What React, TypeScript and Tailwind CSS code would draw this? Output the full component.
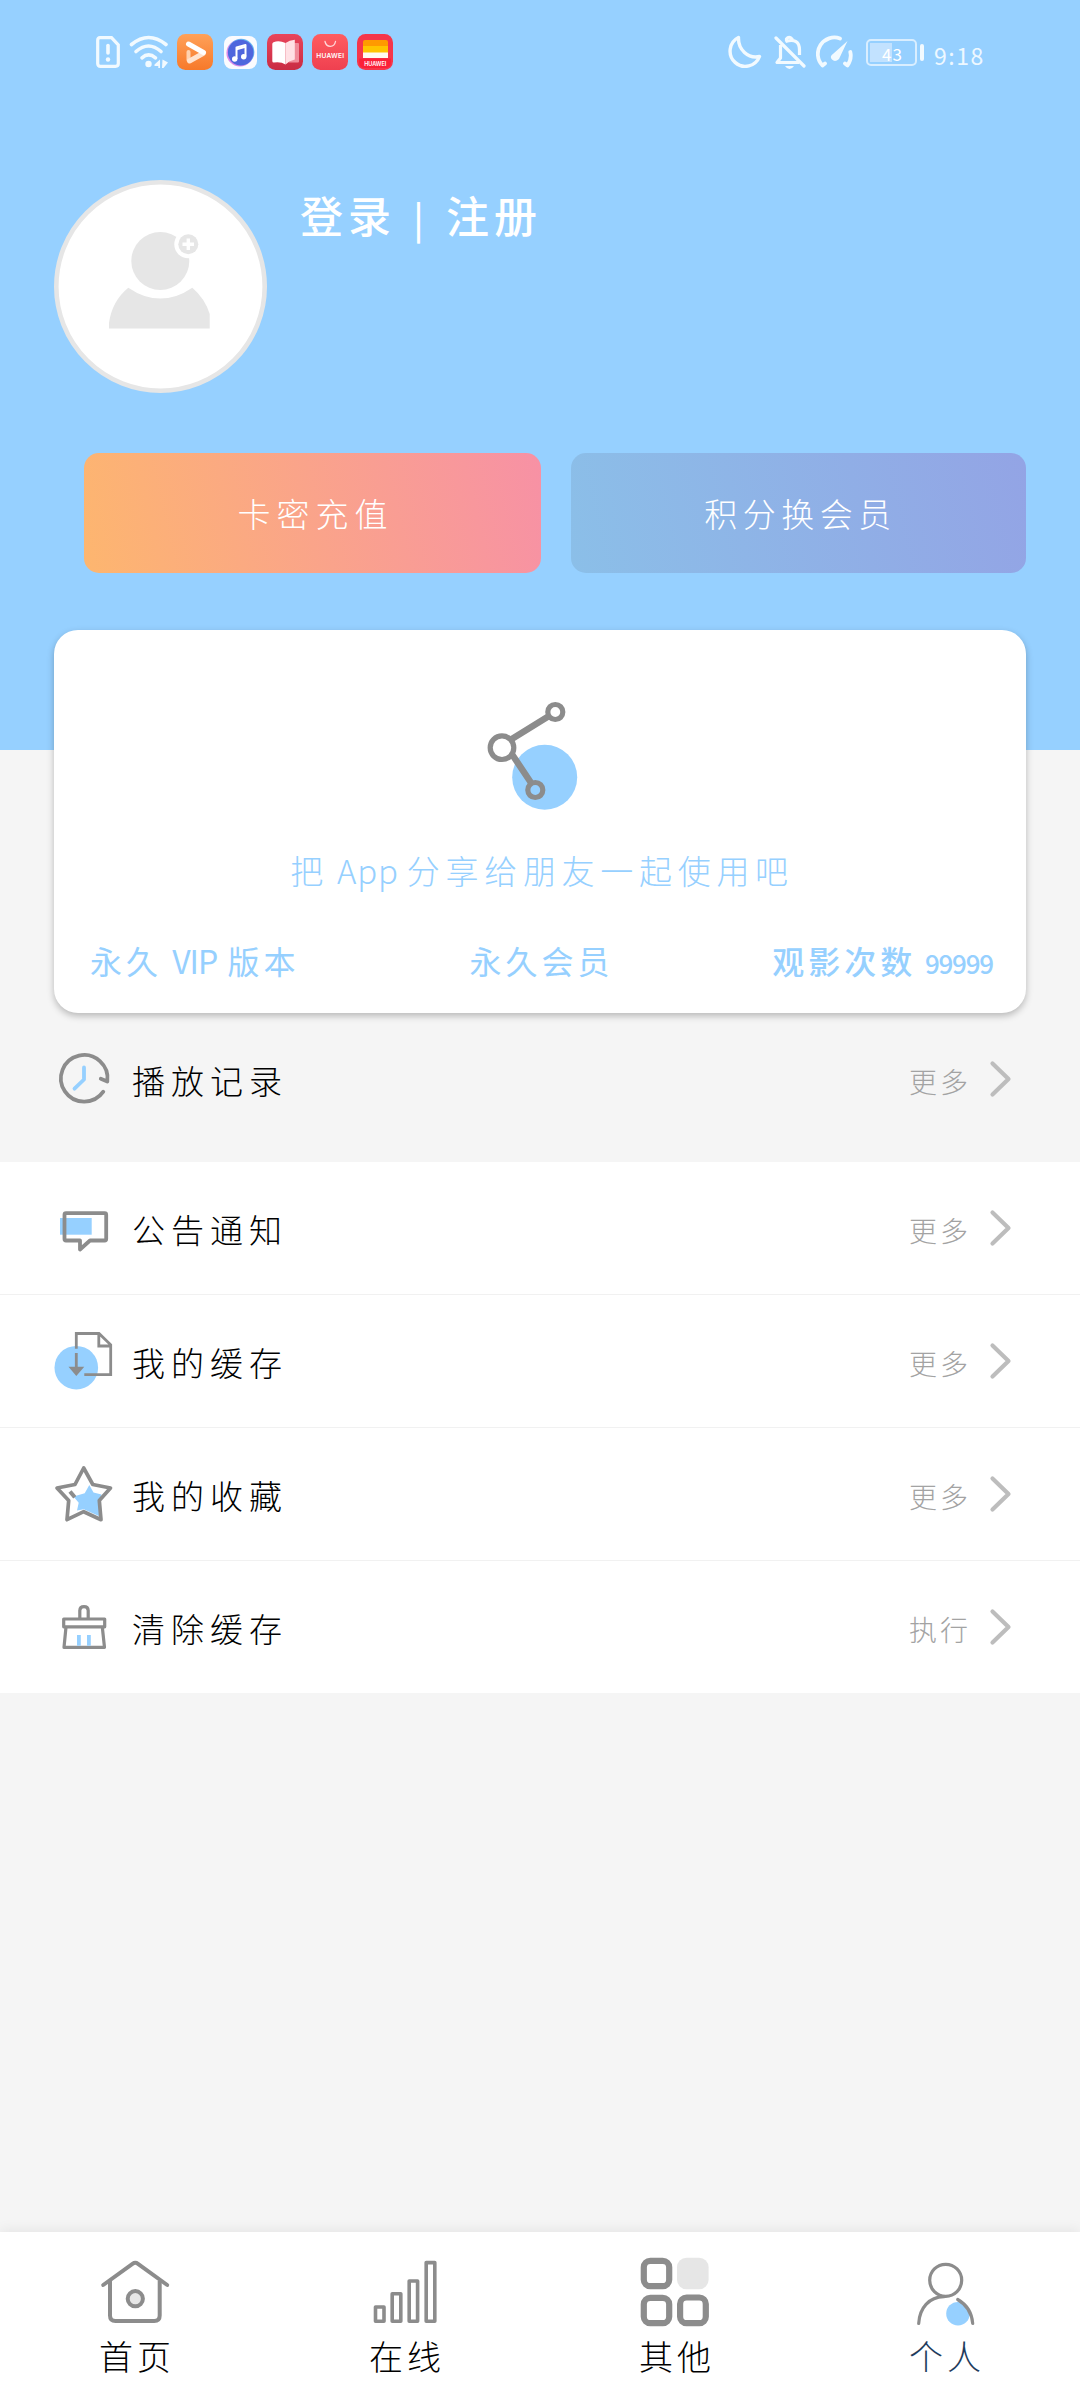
import type { ReactNode } from "react";

function DocAlertIcon() {
    return (
        <svg width="24" height="32" viewBox="0 0 24 32" fill="none" stroke="#f2faff">
            <path d="M4 1.7H15.5L22.3 9V27.5Q22.3 30.3 19.5 30.3H4.5Q1.7 30.3 1.7 27.5V4.2Q1.7 1.7 4 1.7Z" strokeWidth="3.2" />
            <path d="M12 9.5V17" strokeWidth="3.6" strokeLinecap="round" />
            <circle cx="12" cy="23.5" r="2.2" fill="#f2faff" stroke="none" />
        </svg>
    );
}

function WifiIcon() {
    return (
        <svg width="40" height="34" viewBox="0 0 40 34" fill="none" stroke="#f2faff" strokeWidth="3.6" strokeLinecap="round">
            <path d="M2.500 9.500Q19.500-4.500 37 9.500" />
            <path d="M7 16.5Q19.5 5.5 32 16.5" />
            <path d="M13 22.8Q19.5 17 26.5 22.8" />
            <circle cx="19.5" cy="29" r="3.2" fill="#f2faff" stroke="none" />
            <path d="M31 24.5V33H29.3V31H25.5V29.5ZM33.5 24.5L39 27.5L34.5 33H33Z" fill="#f2faff" stroke="none" />
        </svg>
    );
}

function VideoAppIcon() {
    return (
        <svg width="36" height="36" viewBox="0 0 36 36" fill="none" strokeLinecap="round" strokeLinejoin="round">
            <defs>
                <linearGradient id="video" x1="0" y1="0" x2="0" y2="1">
                    <stop offset="0" stopColor="#ffa159" />
                    <stop offset="1" stopColor="#f7792a" />
                </linearGradient>
            </defs>
            <rect width="36" height="36" rx="8.5" fill="url(#video)" />
            <path d="M11.5 18V26" stroke="#ffd2b0" strokeWidth="4" />
            <path d="M12.5 27L26 19.5" stroke="#ffe3cf" strokeWidth="5" />
            <path d="M11.5 10L26.5 18.5" stroke="#fff" strokeWidth="5" />
        </svg>
    );
}

function MusicAppIcon() {
    return (
        <svg width="33" height="33" viewBox="0 0 33 33">
            <rect width="33" height="33" rx="8" fill="#fbfbfe" />
            <circle cx="16" cy="17" r="13.6" fill="#dc8bea" />
            <circle cx="17.2" cy="16" r="13.2" fill="#65b6f3" />
            <circle cx="16.7" cy="16.6" r="12.8" fill="#4f66dd" />
            <path d="M12.5 23V11.5L21.5 9V20.5" fill="none" stroke="#fff" strokeWidth="2" strokeLinejoin="round" />
            <path d="M12.5 13.3L21.5 10.8" stroke="#fff" strokeWidth="2" />
            <circle cx="10.7" cy="23" r="2.7" fill="#fff" />
            <circle cx="19.7" cy="20.8" r="2.7" fill="#fff" />
        </svg>
    );
}

function BookAppIcon() {
    return (
        <svg width="36" height="36" viewBox="0 0 36 36">
            <defs>
                <linearGradient id="book" x1="0" y1="0" x2="0" y2="1">
                    <stop offset="0" stopColor="#e9455b" />
                    <stop offset="1" stopColor="#c92b43" />
                </linearGradient>
            </defs>
            <rect width="36" height="36" rx="8.5" fill="url(#book)" />
            <path d="M27 9H31Q32 9 32 10V27.5Q32 28.5 31 28.5H22Z" fill="#f08d9b" />
            <path d="M18.5 9Q12 6 6.5 8.2Q5.3 8.6 5.3 10V27Q5.3 28.7 7 28.5Q14 27.5 18.5 30.5Z" fill="#fff" />
            <path d="M18.5 9Q22.5 6 27.8 5.8V25.5Q22.5 26.5 18.5 30.5Z" fill="#ffe1e5" />
        </svg>
    );
}

function StoreAppIcon() {
    return (
        <svg width="36" height="36" viewBox="0 0 36 36">
            <defs>
                <linearGradient id="store" x1="0" y1="0" x2="0" y2="1">
                    <stop offset="0" stopColor="#ff5c60" />
                    <stop offset="1" stopColor="#ef4050" />
                </linearGradient>
            </defs>
            <rect width="36" height="36" rx="8.5" fill="url(#store)" />
            <path d="M13 7.5Q14 12.3 18.3 12.3T23.5 7.5" fill="none" stroke="#ffd7d8" strokeWidth="1.3" strokeLinecap="round" />
            <text x="18.2" y="23.6" fontSize="6.6" fontWeight="600" textAnchor="middle" textLength="28" fontFamily="Inter, sans-serif" fill="#fff">
                HUAWEI
            </text>
        </svg>
    );
}

function WalletAppIcon() {
    return (
        <svg width="36" height="36" viewBox="0 0 36 36">
            <rect width="36" height="36" rx="8.5" fill="#f5364a" />
            <path d="M6 8Q6 6 8 6H29Q31 6 31 8V13H6Z" fill="#ff9a00" />
            <path d="M6 12H31V19H6Z" fill="#ffc400" />
            <path d="M6 18.5H31V24H6Z" fill="#fffaf0" />
            <path d="M2 24.5H34V28Q34 34 28 34H8Q2 34 2 28Z" fill="#fb2138" />
            <text x="18.3" y="32" fontSize="5.6" fontWeight="600" textAnchor="middle" textLength="22" fontFamily="Inter, sans-serif" fill="#fff">
                HUAWEI
            </text>
        </svg>
    );
}

function MoonIcon() {
    return (
        <svg width="34" height="34" viewBox="0 0 34 34" fill="none" stroke="#f2faff" strokeWidth="3.4" strokeLinejoin="round">
            <path d="M10.500 2.500A15.200 15.200 0 1 0 31.500 21.500C20 24 10 14.500 10.500 2.500Z" />
        </svg>
    );
}

function BellOffIcon() {
    return (
        <svg width="32" height="34" viewBox="0 0 32 34" fill="none" stroke="#f2faff" strokeWidth="3.2">
            <path d="M2 3L30 31" strokeLinecap="round" />
            <path d="M6.500 10V23L3 27.500H25" strokeLinejoin="round" />
            <path d="M11.500 6.500Q25.500 2.500 25.500 15V20" />
            <path d="M12.500 6.500V4Q15 .5 18 4V6" />
            <path d="M11 31H20Q18 34 15.500 34T11 31Z" fill="#f2faff" stroke="none" />
        </svg>
    );
}

function GaugeIcon() {
    return (
        <svg width="38" height="34" viewBox="0 0 38 34" fill="none" stroke="#f2faff" strokeWidth="3.800" strokeLinecap="round" strokeLinejoin="round">
            <path d="M24 3.500A16.500 16.500 0 0 0 6.500 30.500L9 28.500" />
            <path d="M34.300 17Q36 24 31.500 30.500L29 28.500" />
            <path d="M31.500 6L23 24Q19 27.500 16 24.500T17.500 18.500Z" fill="#f2faff" stroke="none" />
        </svg>
    );
}

function StatusBar() {
    return (
        <div className="flex h-[104px] items-center justify-between pr-24 pl-24">
            <div className="flex items-center">
                <DocAlertIcon />
                <div className="ml-[9px]">
                    <WifiIcon />
                </div>
                <div className="ml-2 flex items-center gap-[9px]">
                    <VideoAppIcon />
                    <div className="mx-[1.5px]">
                        <MusicAppIcon />
                    </div>
                    <BookAppIcon />
                    <StoreAppIcon />
                    <WalletAppIcon />
                </div>
            </div>
            <div className="flex items-center">
                <MoonIcon />
                <div className="ml-[12px]">
                    <BellOffIcon />
                </div>
                <div className="ml-[10px]">
                    <GaugeIcon />
                </div>
                <div className="ml-3 flex items-center gap-[3px]">
                    <div className="flex h-[27px] w-[51px] items-center rounded-[5px] border-2 border-[#d9eeff] bg-[linear-gradient(90deg,#c2e2ff_22px,transparent_22px)] bg-[length:40px_19px] bg-[position:2px_2px] bg-no-repeat pt-1 pl-3.5 text-[17px] tracking-[1px] text-white">
                        43
                    </div>
                    <div className="h-[17px] w-1 rounded-sm bg-[#f2faff]" />
                </div>
                <span className="ml-[10px] w-[50px] pt-1.5 text-[23px] leading-6 tracking-[1.5px] text-[#eef8ff]">
                    9:18
                </span>
            </div>
        </div>
    );
}

function Avatar() {
    return (
        <svg width="213" height="213" viewBox="0 0 213 213" fill="#e6e6e6">
            <circle cx="106.500" cy="106.500" r="104.200" fill="#fff" stroke="#e6e6e6" strokeWidth="4.600" />
            <circle cx="106.300" cy="81" r="29" />
            <circle cx="134.300" cy="64.300" r="14" fill="#fff" />
            <circle cx="134.300" cy="64.300" r="10" />
            <path d="M134.300 58.500V70M128.500 64.300H140" stroke="#fff" strokeWidth="3.400" />
            <path d="M55 148.500V143Q58 121 74.300 107.700Q106.300 129.500 138.300 107.700Q151 118.500 155.700 134V148.500Z" />
        </svg>
    );
}

function ShareIcon() {
    return (
        <svg width="110" height="112" viewBox="25 20 110 112" fill="none" stroke="#8c8c8c">
            <circle cx="84.700" cy="97.300" r="32.500" fill="#96d0ff" stroke="none" />
            <path d="M51 59.500L89 36M52.500 75L71.500 103.500" strokeWidth="6.500" />
            <circle cx="42" cy="67.700" r="11.800" strokeWidth="5.200" fill="#fff" />
            <circle cx="95.300" cy="32" r="7.500" strokeWidth="5.200" fill="#fff" />
            <circle cx="75.300" cy="110" r="7.500" strokeWidth="5.200" />
        </svg>
    );
}

function RowIcon({ children }: { children: ReactNode }) {
    return (
        <svg width="64" height="64" viewBox="0 0 64 64" fill="none" stroke="#8c8c8c" strokeWidth="3.800">
            {children}
        </svg>
    );
}

function HistoryIcon() {
    return (
        <RowIcon>
            <path d="M51.300 44.700A23.300 23.300 0 1 1 55.300 34.500L48.800 31.700" strokeLinecap="round" strokeLinejoin="round" />
            <path d="M32 20.500V32.500L22.500 41.700" stroke="#96d0ff" strokeLinecap="round" strokeLinejoin="round" />
        </RowIcon>
    );
}

function NoticeIcon() {
    return (
        <RowIcon>
            <path d="M8 22H39.700V38.700H8Z" fill="#96d0ff" stroke="none" />
            <path d="M14 17.200H52.700Q54.200 17.200 54.200 18.700V43Q54.200 44.500 52.700 44.500H38L28 53.500V44.500H14Q12.500 44.500 12.500 43V18.700Q12.500 17.200 14 17.200Z" strokeLinejoin="round" />
        </RowIcon>
    );
}

function CacheIcon() {
    return (
        <RowIcon>
            <circle cx="24.300" cy="38.700" r="21.800" fill="#96d0ff" stroke="none" />
            <path d="M24.300 19.700V4.500H47L58.700 15.800V45.600H32.300M46.800 4.500V17H58.700M24.300 24V39" strokeWidth="2.800" />
            <path d="M16.500 37.700H32.300L24.300 47Z" fill="#8c8c8c" stroke="none" />
        </RowIcon>
    );
}

function StarIcon() {
    return (
        <RowIcon>
            <path d="M37.300 23L41.500 30.500L49.500 32.500L47.500 40L49 55L31.700 47.300L25 48.500L26.700 40.700L21.500 34.500L32.700 31.300Z" fill="#96d0ff" stroke="none" />
            <path d="M31.700 6L40.800 22.500L58.500 26L47.300 38.500L49 57.700L31.700 49.700L15 57.700L16.700 38.500L5 26L23 22.500Z" strokeWidth="3.700" strokeLinejoin="round" />
            <path d="M18 29.500L22.800 35.300" strokeWidth="4" />
        </RowIcon>
    );
}

function BrushIcon() {
    return (
        <RowIcon>
            <path d="M27.800 24V15.500Q28 11.600 32 11.600T36.200 15.500V24" strokeWidth="3.200" />
            <path d="M11.700 24H52.700V31.800H11.700ZM14 32L12 52.300H52.500L50.300 32" strokeWidth="3.200" strokeLinejoin="round" />
            <path d="M26.900 40V50.700M36.900 40V50.700" stroke="#96d0ff" />
        </RowIcon>
    );
}

function NavIcon({ children }: { children: ReactNode }) {
    return (
        <svg width="72" height="72" viewBox="0 0 72 72" fill="none" stroke="#8c8c8c" strokeWidth="4">
            {children}
        </svg>
    );
}

function HomeIcon() {
    return (
        <NavIcon>
            <path d="M4.200 29L33.500 7.800Q36.300 5.800 39 7.800L68.200 29" strokeLinecap="round" />
            <path d="M11 25V59.500Q11 65 16.500 65H55.200Q60.700 65 60.700 59.500V25" />
            <circle cx="36.300" cy="42.700" r="7.600" fill="#e6e6e6" />
        </NavIcon>
    );
}

function BarsIcon() {
    return (
        <NavIcon>
            <g strokeWidth="3.600" strokeLinejoin="round">
                <path d="M6.500 51H15V65.200H6.500Z" />
                <path d="M23.200 37.800H31.800V65.200H23.200Z" />
                <path d="M40.200 25H48.600V65.200H40.200Z" />
                <path d="M57.200 6.600H65.800V65.200H57.200Z" />
            </g>
        </NavIcon>
    );
}

function GridIcon() {
    return (
        <NavIcon>
            <g strokeWidth="6.200">
                <rect x="4.800" y="4.800" width="25.400" height="25.400" rx="6.500" />
                <rect x="4.800" y="41.800" width="25.400" height="25.400" rx="6.500" />
                <rect x="41.100" y="41.500" width="25.700" height="25.700" rx="6.500" />
            </g>
            <rect x="38" y="1.700" width="31.600" height="31.600" rx="9.500" fill="#e6e6e6" stroke="none" />
        </NavIcon>
    );
}

function ProfileIcon() {
    return (
        <NavIcon>
            <circle cx="49" cy="57.700" r="11.800" fill="#96d0ff" stroke="none" />
            <g strokeWidth="3.200" strokeLinecap="round">
                <circle cx="36.700" cy="24.300" r="16" />
                <path d="M9.700 67.500C10.500 52 20 41 35 40.700" />
                <path d="M48.700 43.500Q62.500 51.500 63.700 67.500" />
            </g>
        </NavIcon>
    );
}

const rows = [
    { icon: <NoticeIcon />, label: "公告通知", action: "更多" },
    { icon: <CacheIcon />, label: "我的缓存", action: "更多" },
    { icon: <StarIcon />, label: "我的收藏", action: "更多" },
    { icon: <BrushIcon />, label: "清除缓存", action: "执行" },
];

const tabs = [
    { icon: <HomeIcon />, label: "首页" },
    { icon: <BarsIcon />, label: "在线" },
    { icon: <GridIcon />, label: "其他" },
    { icon: <ProfileIcon />, label: "个人", active: true },
];

function Row({ icon, label, action }: { icon: ReactNode; label: string; action: string }) {
    return (
        <div className="box-content flex h-[132px] items-center pr-[68px] pl-[52px]">
            {icon}
            <span className="ml-4 flex-1 pt-0.5 text-[33px] leading-10 font-light tracking-[6px] text-black">
                {label}
            </span>
            <span className="pt-1 text-[28px] leading-9 font-light tracking-[3px] text-[#a3a3a3]">
                {action}
            </span>
            <svg className="ml-[17px]" width="24" height="40" viewBox="0 0 24 40" fill="none" stroke="#bdbdbd" strokeWidth="4.200" strokeLinecap="round" strokeLinejoin="round">
                <path d="M4.500 4.500L20.500 20L4.500 35.500" />
            </svg>
        </div>
    );
}

export default function App() {
    return (
        <div className="flex h-[2400px] w-[1080px] flex-col overflow-hidden bg-[#f5f5f5] font-['Noto_Sans_CJK_SC',sans-serif]">
            <header className="h-[750px] shrink-0 bg-[#96d0ff]">
                <StatusBar />
                <div className="flex px-[54px] pt-[76px]">
                    <Avatar />
                    <h1 className="ml-[33px] pt-2 text-[43px] leading-[52px] font-medium tracking-[5px] whitespace-pre text-white">
                        登录<span className="mx-[4px] text-[37px] tracking-[5px]"> | </span>注册
                    </h1>
                </div>
                <div className="flex gap-[30px] pt-[60px] pr-[54px] pl-[84px]">
                    <button className="h-[120px] flex-1 rounded-[15px] bg-linear-[77deg,#fdb66f,#f791a5] pt-0.5 pl-1.5 text-[33px] font-light tracking-[6px] text-white">
                        卡密充值
                    </button>
                    <button className="h-[120px] flex-1 rounded-[15px] bg-linear-[77deg,#8bbfe8,#93a4e5] pt-0.5 pl-1 text-[33px] font-light tracking-[5.500px] text-white">
                        积分换会员
                    </button>
                </div>
            </header>

            <section className="relative mx-[54px] -mt-[120px] flex h-[383px] shrink-0 flex-col items-center rounded-[24px] bg-white pt-[70px] text-[#96d0ff] shadow-[0_3px_7px_rgba(0,0,0,0.25)]">
                <ShareIcon />
                <p className="mt-[34px] pl-1 text-[33px] leading-12 font-light tracking-[5.700px] whitespace-pre">
                    把<span className="tracking-[0.800px]"> App </span>分享给朋友一起使用吧
                </p>
                <div className="mt-[42px] grid w-full grid-cols-[1fr_auto_1fr] pr-[33px] pl-9 text-[32px] leading-12 tracking-[4px]">
                    <span>
                        永久<span className="mx-[4px] tracking-[-1px]"> VIP </span>版本
                    </span>
                    <span>永久会员</span>
                    <span className="text-right font-medium">
                        观影次数<span className="ml-1 text-[26px] tracking-[-1.200px]"> 99999</span>
                    </span>
                </div>
            </section>

            <Row icon={<HistoryIcon />} label="播放记录" action="更多" />

            <main className="mt-[17px] divide-y divide-[#f1f1f1] bg-white">
                {rows.map((row) => (
                    <Row key={row.label} {...row} />
                ))}
            </main>

            <nav className="mt-auto grid h-[168px] shrink-0 grid-cols-4 bg-white shadow-[0_-2px_12px_rgba(0,0,0,0.07)]">
                {tabs.map((tab) => (
                    <div key={tab.label} className="flex flex-col items-center pt-6">
                        {tab.icon}
                        <span className={tab.active ? "mt-1 pl-1 text-[34px] leading-12 font-light tracking-[4px] text-[#1f3c5c]" : "mt-1 pl-1 text-[34px] leading-12 font-light tracking-[4px] text-black"}>
                            {tab.label}
                        </span>
                    </div>
                ))}
            </nav>
        </div>
    );
}
